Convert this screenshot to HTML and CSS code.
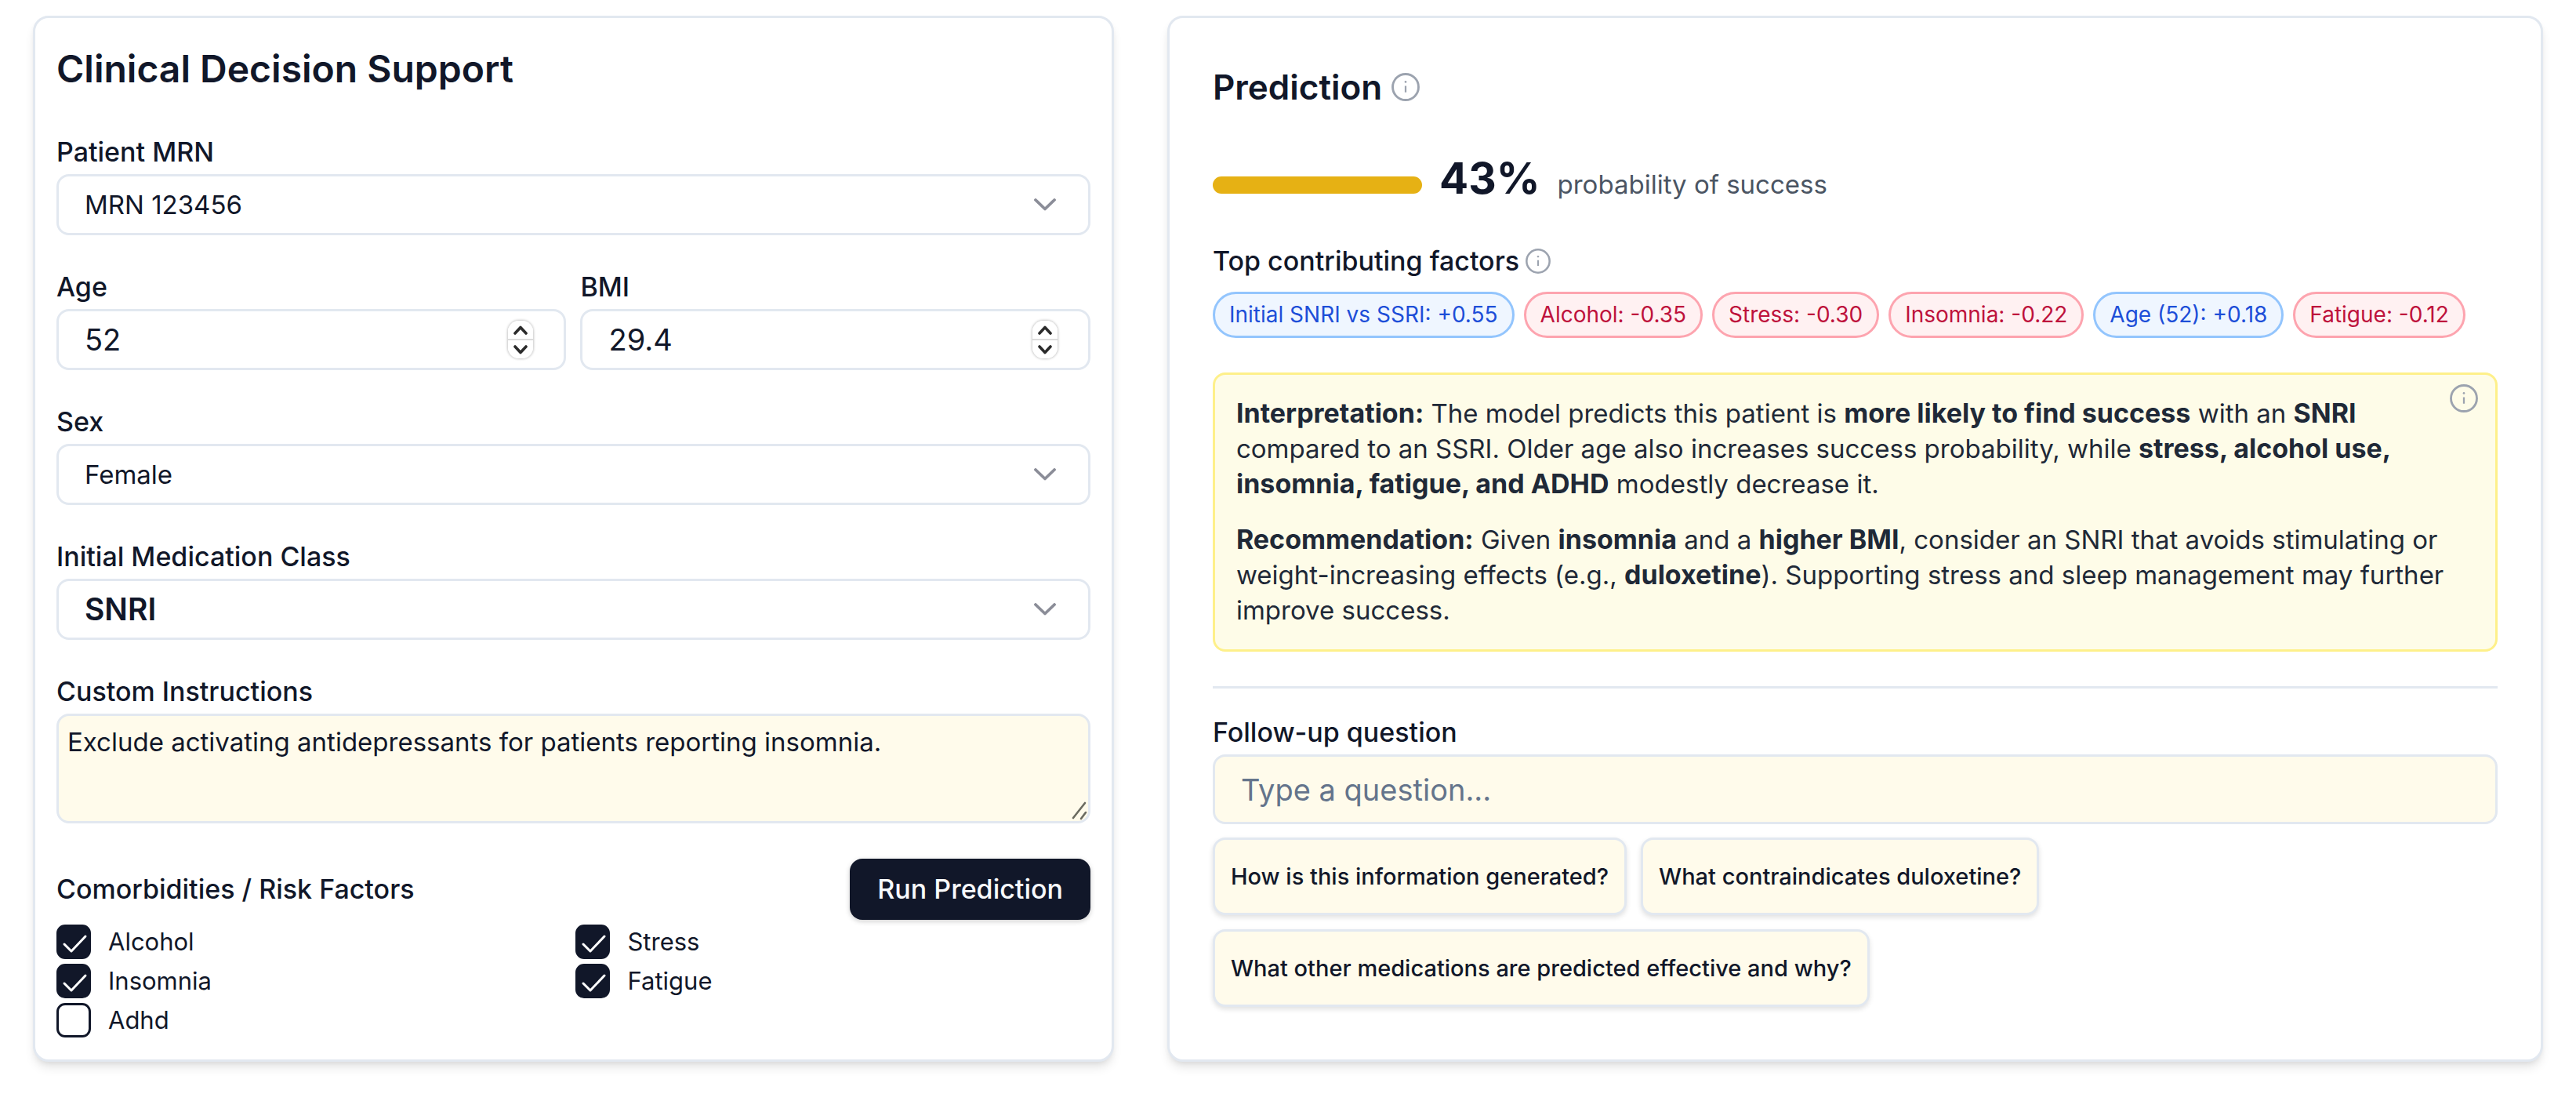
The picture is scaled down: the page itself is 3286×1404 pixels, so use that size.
FILE: index.html
```html
<!DOCTYPE html>
<html lang="en">
<head>
<meta charset="utf-8">
<meta name="viewport" content="width=device-width, initial-scale=1">
<title>Clinical Decision Support</title>
<link rel="stylesheet" href="styles.css">
</head>
<body>
<svg class="sprite" aria-hidden="true">
  <symbol id="icon-info" viewBox="0 0 24 24">
    <circle cx="12" cy="12" r="11" fill="none" stroke="currentColor" stroke-width="1.9"/>
    <path d="M12 11v5.5" fill="none" stroke="currentColor" stroke-width="1.5"/>
    <circle cx="12" cy="7.6" r="0.9" fill="currentColor"/>
  </symbol>
  <symbol id="icon-chevron" viewBox="0 0 28 16">
    <path d="M2 2l12 11.5L26 2" fill="none" stroke="currentColor" stroke-width="3.8" stroke-linecap="round" stroke-linejoin="round"/>
  </symbol>
  <symbol id="icon-up" viewBox="0 0 18 12">
    <path d="M2 10l7-7.5 7 7.5" fill="none" stroke="currentColor" stroke-width="3.6" stroke-linecap="round" stroke-linejoin="round"/>
  </symbol>
  <symbol id="icon-down" viewBox="0 0 18 12">
    <path d="M2 2l7 7.5L16 2" fill="none" stroke="currentColor" stroke-width="3.6" stroke-linecap="round" stroke-linejoin="round"/>
  </symbol>
</svg>

<main class="layout">
  <form class="card card-form">
    <h1 class="title">Clinical Decision Support</h1>

    <div class="fields">
      <div class="field">
        <label class="label" for="mrn">Patient MRN</label>
        <div class="control">
          <select class="box select" id="mrn"><option>MRN 123456</option></select>
          <svg class="chevron" aria-hidden="true"><use href="#icon-chevron"/></svg>
        </div>
      </div>

      <div class="pair">
        <div class="field">
          <label class="label" for="age">Age</label>
          <div class="control">
            <input class="box number" id="age" type="number" value="52">
            <div class="stepper">
              <button class="step" type="button" aria-label="Increase age"><svg class="step-icon"><use href="#icon-up"/></svg></button>
              <button class="step" type="button" aria-label="Decrease age"><svg class="step-icon"><use href="#icon-down"/></svg></button>
            </div>
          </div>
        </div>
        <div class="field">
          <label class="label" for="bmi">BMI</label>
          <div class="control">
            <input class="box number" id="bmi" type="number" step="0.1" value="29.4">
            <div class="stepper">
              <button class="step" type="button" aria-label="Increase BMI"><svg class="step-icon"><use href="#icon-up"/></svg></button>
              <button class="step" type="button" aria-label="Decrease BMI"><svg class="step-icon"><use href="#icon-down"/></svg></button>
            </div>
          </div>
        </div>
      </div>

      <div class="field">
        <label class="label" for="sex">Sex</label>
        <div class="control">
          <select class="box select" id="sex"><option>Female</option></select>
          <svg class="chevron" aria-hidden="true"><use href="#icon-chevron"/></svg>
        </div>
      </div>

      <div class="field">
        <label class="label" for="med">Initial Medication Class</label>
        <div class="control">
          <select class="box select select-strong" id="med"><option>SNRI</option></select>
          <svg class="chevron" aria-hidden="true"><use href="#icon-chevron"/></svg>
        </div>
      </div>

      <div class="field">
        <label class="label" for="custom">Custom Instructions</label>
        <div class="control">
          <textarea class="box textarea" id="custom">Exclude activating antidepressants for patients reporting insomnia.</textarea>
          <svg class="grip" viewBox="0 0 20 24" aria-hidden="true"><path d="M2 21L17 2M12 22l6-8" fill="none" stroke="currentColor" stroke-width="2.6" stroke-linecap="round"/></svg>
        </div>
      </div>
    </div>

    <div class="actions">
      <span class="label" id="risk">Comorbidities / Risk Factors</span>
      <button class="run" type="submit">Run Prediction</button>
    </div>

    <div class="checks" role="group" aria-labelledby="risk">
      <label class="check"><input class="tick" type="checkbox" checked>Alcohol</label>
      <label class="check"><input class="tick" type="checkbox" checked>Stress</label>
      <label class="check"><input class="tick" type="checkbox" checked>Insomnia</label>
      <label class="check"><input class="tick" type="checkbox" checked>Fatigue</label>
      <label class="check"><input class="tick" type="checkbox">Adhd</label>
    </div>
  </form>

  <section class="card card-result">
    <h2 class="subtitle">Prediction <svg class="info" aria-hidden="true"><use href="#icon-info"/></svg></h2>

    <div class="score">
      <div class="meter"></div>
      <strong class="percent">43%</strong>
      <span class="caption">probability of success</span>
    </div>

    <h3 class="label factors-title">Top contributing factors <svg class="info info-small" aria-hidden="true"><use href="#icon-info"/></svg></h3>
    <ul class="chips">
      <li class="chip chip-up">Initial SNRI vs SSRI: +0.55</li>
      <li class="chip chip-down">Alcohol: -0.35</li>
      <li class="chip chip-down">Stress: -0.30</li>
      <li class="chip chip-down">Insomnia: -0.22</li>
      <li class="chip chip-up">Age (52): +0.18</li>
      <li class="chip chip-down">Fatigue: -0.12</li>
    </ul>

    <div class="note">
      <svg class="info note-info" aria-hidden="true"><use href="#icon-info"/></svg>
      <p class="note-text"><b>Interpretation:</b> The model predicts this patient is <b>more likely to find success</b> with an <b>SNRI</b> compared to an SSRI. Older age also increases success probability, while <b>stress, alcohol use, insomnia, fatigue, and ADHD</b> modestly decrease it.</p>
      <p class="note-text"><b>Recommendation:</b> Given <b>insomnia</b> and a <b>higher BMI</b>, consider an SNRI that avoids stimulating or weight-increasing effects (e.g., <b>duloxetine</b>). Supporting stress and sleep management may further improve success.</p>
    </div>

    <hr class="rule">

    <div class="field">
      <label class="label" for="followup">Follow-up question</label>
      <input class="box question" id="followup" type="text" placeholder="Type a question...">
    </div>
    <div class="suggestions">
      <button class="suggestion" type="button">How is this information generated?</button>
      <button class="suggestion" type="button">What contraindicates duloxetine?</button>
      <button class="suggestion" type="button">What other medications are predicted effective and why?</button>
    </div>
  </section>
</main>
</body>
</html>
```
FILE: styles.css
```css
*,
*::before,
*::after {
  box-sizing: border-box;
}

:root {
  --ink: #111729;
  --line: #e2e8f0;
  --cream: #fffbeb;
}

body {
  margin: 0;
  background: #fff;
  color: var(--ink);
  font-family: Inter, "Liberation Sans", sans-serif;
  font-size: 33px;
  line-height: 32px;
}

h1, h2, h3, p, ul {
  margin: 0;
  padding: 0;
}

button, input, select, textarea {
  font: inherit;
  color: inherit;
  margin: 0;
}

.sprite {
  display: none;
}

.layout {
  display: grid;
  grid-template-columns: 11fr 14fr;
  gap: 68px;
  padding: 20px 42px 50px;
}

.card {
  min-width: 0;
  background: #fff;
  border: 3px solid var(--line);
  border-radius: 20px;
  box-shadow: 0 9px 13px -2px rgba(0, 0, 0, 0.1), 0 4px 9px -4px rgba(0, 0, 0, 0.1);
}

.card-form {
  padding: 31px 27px 28px;
}

.card-result {
  padding: 55px 55px 60px;
}

/* Form column */
.title {
  font-size: 48px;
  line-height: 68px;
  font-weight: 600;
  margin-bottom: 56px;
}

.fields {
  display: grid;
  gap: 50px;
}

.field {
  display: grid;
  gap: 12px;
}

.pair {
  display: grid;
  grid-template-columns: 1fr 1fr;
  gap: 18px;
}

.label {
  font-size: 34px;
  line-height: 32px;
  font-weight: 500;
}

.control {
  display: grid;
  align-items: center;
}

.control > * {
  grid-area: 1 / 1;
}

.box {
  width: 100%;
  height: 78px;
  padding: 0 33px;
  border: 3px solid var(--line);
  border-radius: 16px;
  background: #fff;
  outline: none;
}

.select {
  appearance: none;
}

.select-strong {
  font-size: 39px;
  font-weight: 600;
}

.chevron {
  justify-self: end;
  width: 28px;
  height: 16px;
  margin-right: 44px;
  color: #8b8d98;
  pointer-events: none;
}

.number {
  font-size: 38px;
  appearance: textfield;
}

.number::-webkit-inner-spin-button,
.number::-webkit-outer-spin-button {
  appearance: none;
  margin: 0;
}

.stepper {
  justify-self: end;
  display: grid;
  width: 32px;
  height: 48px;
  margin-right: 42px;
  border-radius: 14px;
  background: #fff;
  box-shadow: 0 0 3px 1px rgba(0, 0, 0, 0.22);
  overflow: hidden;
}

.step {
  display: grid;
  place-items: center;
  padding: 0;
  border: 0;
  background: #fff;
  color: #2b2b2b;
}

.step + .step {
  border-top: 2px solid #dcdcdc;
}

.step-icon {
  width: 18px;
  height: 12px;
}

.textarea {
  display: block;
  height: 140px;
  padding: 11px;
  line-height: 44px;
  background: var(--cream);
  resize: none;
}

.grip {
  place-self: end;
  width: 20px;
  height: 24px;
  margin: 4px;
  color: #6b6b60;
  pointer-events: none;
}

.actions {
  display: flex;
  align-items: center;
  justify-content: space-between;
  margin-top: 45px;
}

.run {
  height: 78px;
  padding: 0 35px;
  border: 0;
  border-radius: 16px;
  background: var(--ink);
  color: #f8fafc;
  font-size: 34px;
  font-weight: 500;
  box-shadow: 0 2px 6px rgba(0, 0, 0, 0.2);
}

.checks {
  display: grid;
  grid-template-columns: 1fr 1fr;
  gap: 6px;
  margin-top: 6px;
}

.check {
  display: flex;
  align-items: center;
  gap: 22px;
  font-size: 31px;
}

.tick {
  appearance: none;
  width: 44px;
  height: 44px;
  border: 3px solid var(--ink);
  border-radius: 11px;
  background: #fff;
}

.tick:checked {
  background: var(--ink) url("data:image/svg+xml,%3Csvg xmlns='http://www.w3.org/2000/svg' viewBox='0 0 38 38'%3E%3Cpath d='M7 22l9 9L34 12' fill='none' stroke='%23fff' stroke-width='3' stroke-linecap='round' stroke-linejoin='round'/%3E%3C/svg%3E") center / 38px 38px no-repeat;
}

/* Result column */
.subtitle {
  display: flex;
  align-items: center;
  gap: 12px;
  font-size: 44px;
  line-height: 66px;
  font-weight: 600;
}

.info {
  width: 36px;
  height: 36px;
  color: #9ca3af;
  flex: none;
}

.info-small {
  width: 32px;
  height: 32px;
}

.score {
  display: flex;
  align-items: baseline;
  gap: 22px;
  margin-top: 55px;
}

.meter {
  width: 267px;
  height: 22px;
  border-radius: 11px;
  background: #e6b114;
}

.percent {
  font-size: 55px;
  line-height: 56px;
  font-weight: 700;
}

.caption {
  color: #4b5563;
}

.factors-title {
  display: flex;
  align-items: center;
  gap: 8px;
  margin-top: 62px;
}

.chips {
  display: flex;
  flex-wrap: wrap;
  gap: 12px;
  margin-top: 23px;
  list-style: none;
}

.chip {
  padding: 0 18px;
  border: 3px solid;
  border-radius: 30px;
  font-size: 28px;
  line-height: 53px;
}

.chip-up {
  color: #1d4ed8;
  background: #eff6ff;
  border-color: #93c5fd;
}

.chip-down {
  color: #be123c;
  background: #fff1f2;
  border-color: #fda4af;
}

.note {
  position: relative;
  display: grid;
  gap: 26px;
  margin-top: 44px;
  padding: 27px;
  border: 3px solid #fef08a;
  border-radius: 16px;
  background: #fefce8;
  color: #1f2937;
}

.note-text {
  line-height: 45px;
}

.note-text b {
  font-size: 34px;
  line-height: 32px;
  font-weight: 700;
}

.note-info {
  position: absolute;
  top: 12px;
  right: 22px;
}

.rule {
  margin: 44px 0 40px;
  border: 0;
  border-top: 3px solid var(--line);
}

.question {
  height: 89px;
  font-size: 38px;
  background: var(--cream);
}

.question::placeholder {
  color: #64748b;
  opacity: 1;
}

.suggestions {
  display: flex;
  flex-wrap: wrap;
  gap: 18px;
  margin-top: 17px;
}

.suggestion {
  height: 99px;
  padding: 0 20px;
  border: 3px solid var(--line);
  border-radius: 16px;
  background: var(--cream);
  font-size: 29px;
  font-weight: 500;
  box-shadow: 0 3px 6px rgba(0, 0, 0, 0.12);
}
```
